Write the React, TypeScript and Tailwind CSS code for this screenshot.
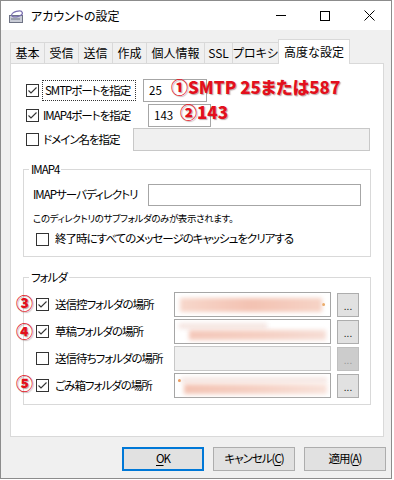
import React from "react";

const font = "font-['Noto_Sans_CJK_JP',sans-serif] [font-feature-settings:'palt']";
const body = "text-[11.5px] tracking-[-1px]";

function Check({ checked }: { checked: boolean }) {
  return (
    <div className="w-[13px] h-[13px] shrink-0 border border-[#333] bg-white flex items-center justify-center">
      {checked && (
        <svg width="11" height="11" viewBox="0 0 11 11">
          <polyline points="1.5,5.5 4,8 9.5,2.5" fill="none" stroke="#333" strokeWidth="1.1" />
        </svg>
      )}
    </div>
  );
}

function Blur({ variant }: { variant: number }) {
  if (variant === 1)
    return (
      <div className="w-full h-full flex items-center px-[5px]">
        <div className="h-[14px] flex-1 bg-gradient-to-r from-[#f7d7cb] via-[#f3c2b2] to-[#f6d3c6] blur-[2px]" />
        <div className="w-[3px] h-[3px] bg-[#e8a050] rounded-full" />
      </div>
    );
  if (variant === 2)
    return (
      <div className="w-full h-full flex flex-col justify-end px-[4px] pb-[3px] gap-[1px]">
        <div className="h-[6px] w-[60%] bg-[#f5e6e2] blur-[2px]" />
        <div className="h-[10px] ml-[10px] bg-gradient-to-r from-[#f4c8ba] via-[#f5cfc2] to-[#f6ddd5] blur-[2px]" />
      </div>
    );
  return (
    <div className="w-full h-full flex flex-col justify-end px-[3px] pb-[3px] gap-[1px]">
      <div className="flex items-center">
        <div className="w-[3px] h-[3px] bg-[#e88a40] rounded-full" />
        <div className="h-[6px] flex-1 bg-[#f6e8e4] blur-[2px]" />
      </div>
      <div className="h-[10px] ml-[6px] bg-gradient-to-r from-[#f3c3b3] via-[#f5d0c3] to-[#f8e2da] blur-[2px]" />
    </div>
  );
}

function FolderRow({
  checked,
  label,
  disabled,
  variant,
}: {
  checked: boolean;
  label: string;
  disabled?: boolean;
  variant?: number;
}) {
  return (
    <div className="flex items-center h-[25px]">
      <Check checked={checked} />
      <div className="ml-[6px] w-[119px] whitespace-nowrap">{label}</div>
      <div
        className={
          "w-[157px] h-[25px] border " +
          (disabled ? "border-[#c8c8c8] bg-[#f0f0f0]" : "border-[#a6a6a6] bg-white")
        }
      >
        {variant ? <Blur variant={variant} /> : null}
      </div>
      <div
        className={
          "ml-[6px] w-[22px] h-[24px] border flex items-end justify-center pb-[5px] text-[10px] tracking-normal leading-none " +
          (disabled
            ? "border-[#bfbfbf] bg-[#cccccc] text-[#9a9a9a]"
            : "border-[#adadad] bg-[#e1e1e1] text-[#222]")
        }
      >
        ...
      </div>
    </div>
  );
}

const tabs = [
  { t: "基本", w: "w-[34px]" },
  { t: "受信", w: "w-[34px]" },
  { t: "送信", w: "w-[34px]" },
  { t: "作成", w: "w-[34px]" },
  { t: "個人情報", w: "w-[58px]" },
  { t: "SSL", w: "w-[28px]" },
  { t: "プロキシ", w: "w-[46px]" },
];

const red =
  "text-[#e3101c] font-black text-[17px] leading-[20px] whitespace-nowrap [text-shadow:1px_1px_1px_rgba(120,80,80,0.5)]";

export default function App() {
  return (
    <div className={"relative w-[394px] h-[480px] bg-white overflow-hidden text-black " + font}>
      <div className="w-[392px] h-[479px] border border-[#8c8c8c] bg-[#f0f0f0] flex flex-col">
        {/* title bar */}
        <div className="h-[29px] bg-white flex items-center">
          <div className="ml-[7px] w-[16px] h-[16px]">
            <svg width="16" height="16" viewBox="0 0 16 16">
              <rect x="1.5" y="7.5" width="13" height="7" fill="#c9ccd6" stroke="#6e7384" />
              <ellipse cx="9" cy="6" rx="5.5" ry="2.6" fill="none" stroke="#7a6fb0" strokeWidth="1.3" transform="rotate(-15 9 6)" />
              <path d="M3 11 h9" stroke="#6e7384" />
            </svg>
          </div>
          <div className="ml-[7px] text-[12px] leading-none">アカウントの設定</div>
          <div className="flex-1" />
          <div className="w-[44px] h-[29px] flex items-center justify-center">
            <div className="w-[10px] h-px bg-black" />
          </div>
          <div className="w-[44px] h-[29px] flex items-center justify-center">
            <div className="w-[10px] h-[10px] border border-black" />
          </div>
          <div className="w-[44px] h-[29px] flex items-center justify-center">
            <svg width="11" height="11" viewBox="0 0 11 11">
              <path d="M0.5 0.5 L10.5 10.5 M10.5 0.5 L0.5 10.5" stroke="#000" strokeWidth="1" />
            </svg>
          </div>
        </div>

        {/* tabs */}
        <div className="mt-[9px] ml-[9px] h-[24px] flex items-end">
          {tabs.map((tab) => (
            <div
              key={tab.t}
              className={
                tab.w +
                " h-[21px] border-t border-l border-[#d9d9d9] bg-[#f0f0f0] flex items-center justify-center text-[12px] leading-none whitespace-nowrap"
              }
            >
              {tab.t}
            </div>
          ))}
          <div className="relative z-10 -mb-px w-[72px] h-[25px] border-t border-l border-r border-[#d9d9d9] bg-white flex items-center justify-center pb-[1px] text-[12px] leading-none whitespace-nowrap">
            高度な設定
          </div>
        </div>

        {/* panel */}
        <div className={"ml-[9px] w-[374px] h-[374px] border border-[#d9d9d9] bg-white pl-[15px] pt-[15px] " + body}>
          <div className="flex items-center h-[23px]">
            <Check checked />
            <div className="ml-[3px] w-[94px] h-[21px] border border-dotted border-[#333] flex items-center pl-[2px] whitespace-nowrap">
              SMTPポートを指定
            </div>
            <div className="ml-[7px] w-[64px] h-[23px] border border-[#a6a6a6] flex items-center pl-[5px] tracking-normal">25</div>
          </div>
          <div className="mt-[2px] flex items-center h-[23px]">
            <Check checked />
            <div className="ml-[4px] w-[105px] whitespace-nowrap">IMAP4ポートを指定</div>
            <div className="w-[63px] h-[23px] border border-[#a6a6a6] flex items-center pl-[5px] tracking-normal">143</div>
          </div>
          <div className="mt-[1px] flex items-center h-[23px]">
            <Check checked={false} />
            <div className="ml-[4px] w-[90px] whitespace-nowrap">ドメイン名を指定</div>
            <div className="w-[237px] h-[23px] border border-[#c8c8c8] bg-[#f0f0f0]" />
          </div>

          {/* IMAP4 group */}
          <div className="relative mt-[18px] -ml-[3px] w-[348px] h-[88px] border border-[#d9d9d9] pl-[9px] pt-[14px]">
            <div className="absolute -top-[9px] left-[5px] bg-white px-[2px] leading-[16px]">IMAP4</div>
            <div className="flex items-center h-[22px]">
              <div className="w-[115px] whitespace-nowrap">IMAPサーバディレクトリ</div>
              <div className="w-[213px] h-[22px] border border-[#a6a6a6]" />
            </div>
            <div className="mt-[5px] text-[9.5px] tracking-[-0.4px] leading-[14px] whitespace-nowrap">
              このディレクトリのサブフォルダのみが表示されます。
            </div>
            <div className="mt-[6px] ml-[3px] flex items-center h-[16px]">
              <Check checked={false} />
              <div className="ml-[6px] whitespace-nowrap">終了時にすべてのメッセージのキャッシュをクリアする</div>
            </div>
          </div>

          {/* folder group */}
          <div className="relative mt-[20px] -ml-[3px] w-[348px] h-[128px] border border-[#d9d9d9] pl-[12px] pt-[14px] flex flex-col gap-[2px]">
            <div className="absolute -top-[9px] left-[5px] bg-white px-[2px] leading-[16px]">フォルダ</div>
            <FolderRow checked label="送信控フォルダの場所" variant={1} />
            <FolderRow checked label="草稿フォルダの場所" variant={2} />
            <FolderRow checked={false} label="送信待ちフォルダの場所" disabled />
            <FolderRow checked label="ごみ箱フォルダの場所" variant={3} />
          </div>
        </div>

        {/* buttons */}
        <div className={"mt-[10px] flex justify-end gap-[9px] pr-[5px] " + body}>
          <div className="w-[82px] h-[24px] border-2 border-[#0078d7] bg-[#e1e1e1] flex items-center justify-center">
            <span className="underline underline-offset-2">O</span>K
          </div>
          <div className="w-[82px] h-[24px] border border-[#adadad] bg-[#e1e1e1] flex items-center justify-center">
            キャンセル(<span className="underline underline-offset-2">C</span>)
          </div>
          <div className="w-[82px] h-[24px] border border-[#adadad] bg-[#e1e1e1] flex items-center justify-center">
            適用(<span className="underline underline-offset-2">A</span>)
          </div>
        </div>
      </div>

      {/* annotations */}
      <div className={"absolute left-[171px] top-[77px] " + red}>①SMTP 25または587</div>
      <div className={"absolute left-[180px] top-[102px] " + red}>②143</div>
      <div className={"absolute left-[16px] top-[293px] " + red}>③</div>
      <div className={"absolute left-[16px] top-[321px] " + red}>④</div>
      <div className={"absolute left-[16px] top-[373px] " + red}>⑤</div>
    </div>
  );
}
